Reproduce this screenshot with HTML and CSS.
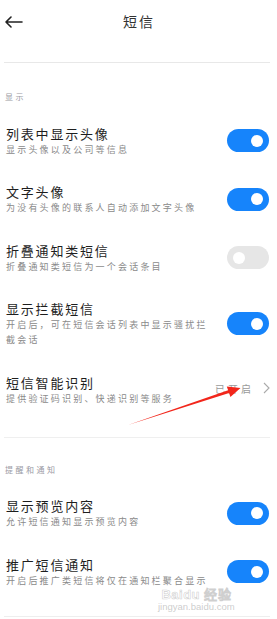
FILE: index.html
```html
<!DOCTYPE html>
<html lang="zh-CN">
<head>
<meta charset="utf-8">
<title>短信</title>
<link rel="stylesheet" href="styles.css">
</head>
<body>
<div class="page">
  <header class="topbar">
    <svg class="back" width="19" height="12" viewBox="0 0 19 12" aria-hidden="true">
      <path d="M18 6H2M7 1L2 6L7 11" fill="none" stroke="#222" stroke-width="1.6" stroke-linecap="round" stroke-linejoin="round"/>
    </svg>
    <div class="title">短信</div>
  </header>
  <div class="divider first"></div>

  <div class="section-label">显示</div>

  <div class="row">
    <div class="text">
      <div class="row-title">列表中显示头像</div>
      <div class="row-sub">显示头像以及公司等信息</div>
    </div>
    <div class="toggle on"></div>
  </div>

  <div class="row">
    <div class="text">
      <div class="row-title">文字头像</div>
      <div class="row-sub">为没有头像的联系人自动添加文字头像</div>
    </div>
    <div class="toggle on"></div>
  </div>

  <div class="row">
    <div class="text">
      <div class="row-title">折叠通知类短信</div>
      <div class="row-sub">折叠通知类短信为一个会话条目</div>
    </div>
    <div class="toggle off"></div>
  </div>

  <div class="row">
    <div class="text narrow">
      <div class="row-title">显示拦截短信</div>
      <div class="row-sub">开启后，可在短信会话列表中显示骚扰拦截会话</div>
    </div>
    <div class="toggle on"></div>
  </div>

  <div class="row">
    <div class="text">
      <div class="row-title">短信智能识别</div>
      <div class="row-sub">提供验证码识别、快递识别等服务</div>
    </div>
    <div class="status">
      <span class="status-text">已开启</span>
      <svg class="chev" width="7" height="12" viewBox="0 0 7 12" aria-hidden="true">
        <path d="M1 1L6 6L1 11" fill="none" stroke="#aaa" stroke-width="1.1"/>
      </svg>
    </div>
  </div>

  <div class="divider second"></div>

  <div class="section-label second-label">提醒和通知</div>

  <div class="row">
    <div class="text">
      <div class="row-title">显示预览内容</div>
      <div class="row-sub">允许短信通知显示预览内容</div>
    </div>
    <div class="toggle on"></div>
  </div>

  <div class="row">
    <div class="text">
      <div class="row-title">推广短信通知</div>
      <div class="row-sub">开启后推广类短信将仅在通知栏聚合显示</div>
    </div>
    <div class="toggle on"></div>
  </div>

  <div class="divider last"></div>

  <svg class="red-arrow" width="277" height="619" viewBox="0 0 277 619" aria-hidden="true">
    <polygon points="128,425 228.1,390.3 226.8,386.4 240.5,388 230.4,397 229.1,393.1" fill="#f2261b"/>
  </svg>
  <div class="watermark">
    <div class="wm-logo">Baidu 经验</div>
    <div class="wm-url">jingyan.baidu.com</div>
  </div>
</div>
</body>
</html>
```
FILE: styles.css
```css
html, body {
  margin: 0;
  padding: 0;
  background: #ffffff;
}
body {
  font-family: "Noto Sans CJK SC", "Noto Sans", sans-serif;
  color: #222;
  overflow: hidden;
}
.page {
  position: relative;
  width: 277px;
  height: 619px;
  overflow: hidden;
}
.topbar {
  position: relative;
  height: 42px;
  display: flex;
  align-items: center;
  justify-content: center;
  margin-bottom: 20px;
}
.back {
  position: absolute;
  left: 4px;
  top: 16px;
}
.title {
  font-size: 14px;
  letter-spacing: 2px;
  color: #333;
  margin-left: 1px;
}
.divider {
  height: 1px;
  background: #e8e8e8;
  margin: 0 7px 0 4px;
}
.divider.second {
  margin-top: 18px;
  background: #efefef;
}
.divider.last {
  margin-top: 15px;
  background: #eeeeee;
}
.section-label {
  font-size: 8px;
  line-height: 12px;
  letter-spacing: 2.5px;
  color: #9a9aa4;
  padding: 27.5px 0 9px 5px;
}
.section-label.second-label {
  padding-top: 26px;
  padding-bottom: 8px;
}
.row {
  display: flex;
  align-items: center;
  justify-content: space-between;
  padding: 13px 8px 13.5px 6px;
}
.text {
  flex: 1;
  min-width: 0;
}
.text.narrow {
  max-width: 210px;
}
.row-title {
  font-size: 13px;
  line-height: 17px;
  letter-spacing: 1.8px;
  color: #1e1e1e;
}
.row-sub {
  font-size: 9px;
  line-height: 15px;
  letter-spacing: 2.2px;
  color: #8a8a8a;
}
.toggle {
  position: relative;
  flex: none;
  width: 42px;
  height: 23px;
  border-radius: 12px;
}
.toggle.on {
  background: #1684fb;
}
.toggle.off {
  background: #e6e6e6;
}
.toggle::after {
  content: "";
  position: absolute;
  top: 5.5px;
  width: 12px;
  height: 12px;
  border-radius: 50%;
  background: #ffffff;
}
.toggle.on::after {
  right: 6px;
}
.toggle.off::after {
  left: 6px;
}
.status {
  display: flex;
  align-items: center;
  gap: 9px;
  margin-bottom: 3px;
  margin-right: -1px;
}
.status-text {
  font-size: 10px;
  letter-spacing: 3px;
  color: #9a9a9a;
}
.red-arrow {
  position: absolute;
  left: 0;
  top: 0;
  pointer-events: none;
}
.watermark {
  position: absolute;
  left: 158px;
  top: 588px;
  text-align: center;
  pointer-events: none;
}
.wm-logo {
  font-family: "Liberation Sans", sans-serif;
  font-weight: bold;
  font-size: 13px;
  line-height: 13px;
  color: rgba(255, 255, 255, 0.5);
  -webkit-text-stroke: 0.6px rgba(160, 160, 160, 0.5);
  letter-spacing: 0.5px;
}
.wm-url {
  font-family: "Liberation Sans", sans-serif;
  font-size: 9.5px;
  line-height: 12px;
  color: rgba(170, 170, 170, 0.6);
}
```
